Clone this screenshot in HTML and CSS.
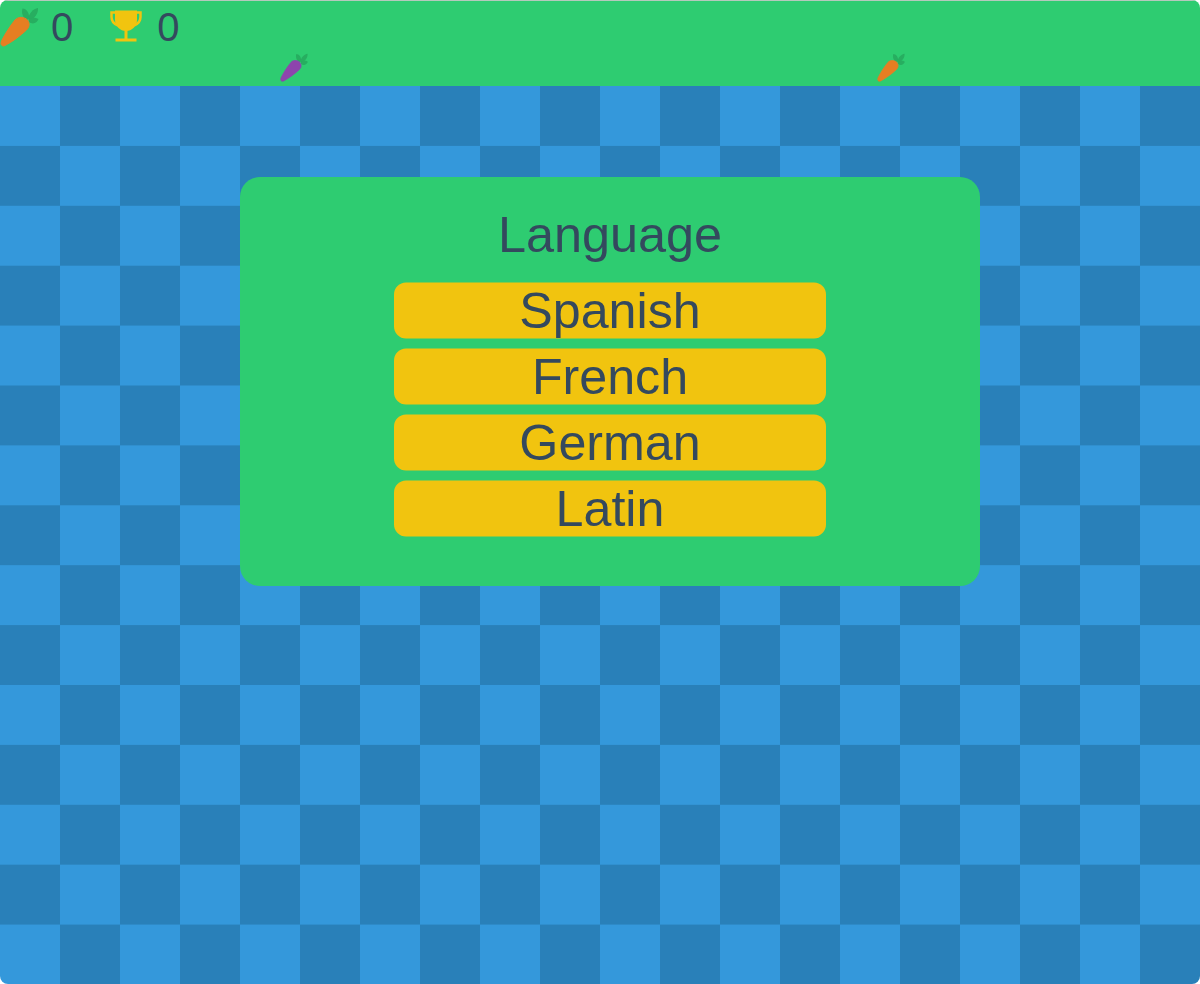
FILE: index.html
```html
<!DOCTYPE html>
<html lang="en">
<head>
    <meta charset="UTF-8">
    <meta name="viewport" content="width=device-width, initial-scale=1.0">
    <title>Carrot Game</title>
    <link rel="stylesheet" href="styles.css">
</head>
<body>
    <svg class="defs" width="0" height="0" aria-hidden="true">
        <symbol id="carrot-leaves" viewBox="0 0 40 40">
            <path d="M27 13 C23 11 21 6 22.500 1.500 C26.500 1.500 29.500 6 29 11Z"/>
            <path d="M28 12 C29 6 33 2 38 1 C38.500 6 35 11 30 13Z"/>
            <path d="M29 12 C32 10 35 10 38.500 12 C37 16 33 18 29 15Z"/>
        </symbol>
    </svg>

    <div class="app">
        <header class="topbar">
            <div class="stats">
                <div class="stat">
                    <svg class="icon-carrot" viewBox="0 0 40 40">
                        <use href="#carrot-leaves" class="leaves"/>
                        <path class="body-orange" d="M1.500 34 C5 27 10 19 15 13 C18 9.500 24 9.500 27.500 13 C30 16.500 29.500 20 26.500 23 C20 29 12 35 5 38.500 C2 40 0 37.500 1.500 34Z"/>
                    </svg>
                    <span>0</span>
                </div>
                <div class="stat">
                    <svg class="icon-trophy" viewBox="0 0 36 32">
                        <path class="trophy-handle" d="M5 2.500 H1.500 V7 C1.500 11 4 14 8 15.500 M27 2.500 H30.500 V7 C30.500 11 28 14 24 15.500"/>
                        <path d="M5 0.500 H27 V10 C27 16 22 21 16 21 C10 21 5 16 5 10Z"/>
                        <rect x="14.500" y="20" width="3" height="9"/>
                        <rect x="5.500" y="28.500" width="21" height="3"/>
                    </svg>
                    <span>0</span>
                </div>
            </div>
            <svg class="falling falling-purple" viewBox="0 0 40 40">
                <use href="#carrot-leaves" class="leaves"/>
                <path class="body-purple" d="M1.500 34 C5 27 10 19 15 13 C18 9.500 24 9.500 27.500 13 C30 16.500 29.500 20 26.500 23 C20 29 12 35 5 38.500 C2 40 0 37.500 1.500 34Z"/>
            </svg>
            <svg class="falling falling-orange" viewBox="0 0 40 40">
                <use href="#carrot-leaves" class="leaves"/>
                <path class="body-orange" d="M1.500 34 C5 27 10 19 15 13 C18 9.500 24 9.500 27.500 13 C30 16.500 29.500 20 26.500 23 C20 29 12 35 5 38.500 C2 40 0 37.500 1.500 34Z"/>
            </svg>
        </header>

        <main class="board">
            <section class="dialog">
                <h1 class="dialog-title">Language</h1>
                <div class="options">
                    <button class="option">Spanish</button>
                    <button class="option">French</button>
                    <button class="option">German</button>
                    <button class="option">Latin</button>
                </div>
            </section>
        </main>
    </div>
</body>
</html>
```

FILE: styles.css
```css
html, body {
    margin: 0;
    padding: 0;
    height: 100%;
    background: #fff;
}

body {
    font-family: "Liberation Sans", Arial, sans-serif;
    color: #34495e;
    overflow: hidden;
}

.defs {
    position: absolute;
}

.app {
    height: 100vh;
    display: flex;
    flex-direction: column;
    border-radius: 8px;
    overflow: hidden;
}

.topbar {
    position: relative;
    box-sizing: border-box;
    height: 86px;
    flex: none;
    background: #2ecc71;
    border-top: 1px solid #b5c9bd;
}

.stats {
    display: flex;
    padding-top: 3px;
}

.stat {
    display: flex;
    align-items: center;
    gap: 11px;
    margin-right: 37px;
    font-size: 40px;
    line-height: 46px;
}

.icon-carrot {
    width: 40px;
    height: 40px;
}

.icon-trophy {
    width: 36px;
    height: 32px;
    margin-bottom: 2px;
    fill: #f1c40f;
}

.trophy-handle {
    fill: none;
    stroke: #f1c40f;
    stroke-width: 2.500;
}

.leaves {
    fill: #27ae60;
}

.body-orange {
    fill: #e67e22;
    stroke: #e67e22;
}

.body-purple {
    fill: #8e44ad;
    stroke: #8e44ad;
}

/* carrots dropping onto the board */
.falling {
    position: absolute;
    top: 52px;
    width: 29px;
    height: 29px;
}

.falling-purple {
    left: 280px;
}

.falling-orange {
    left: 877px;
}

.board {
    flex: 1;
    box-sizing: border-box;
    padding: 91px 220px 0 240px;
    background: conic-gradient(#2980b9 25%, #3498db 0 50%, #2980b9 0 75%, #3498db 0) 0 0 / 120px 119.800px;
}

.dialog {
    box-sizing: border-box;
    height: 409px;
    padding-top: 29px;
    background: #2ecc71;
    border-radius: 20px;
    display: flex;
    flex-direction: column;
    align-items: center;
}

.dialog-title {
    margin: 0 0 19px;
    font-size: 50.400px;
    font-weight: normal;
    line-height: 58px;
}

.options {
    display: flex;
    flex-direction: column;
    gap: 10px;
    transform: translateY(-0.500px);
}

.option {
    width: 432px;
    height: 56px;
    padding: 0;
    border: none;
    border-radius: 12px;
    background: #f1c40f;
    color: #34495e;
    font-family: inherit;
    font-size: 50.200px;
    line-height: 56px;
    cursor: pointer;
}
```
